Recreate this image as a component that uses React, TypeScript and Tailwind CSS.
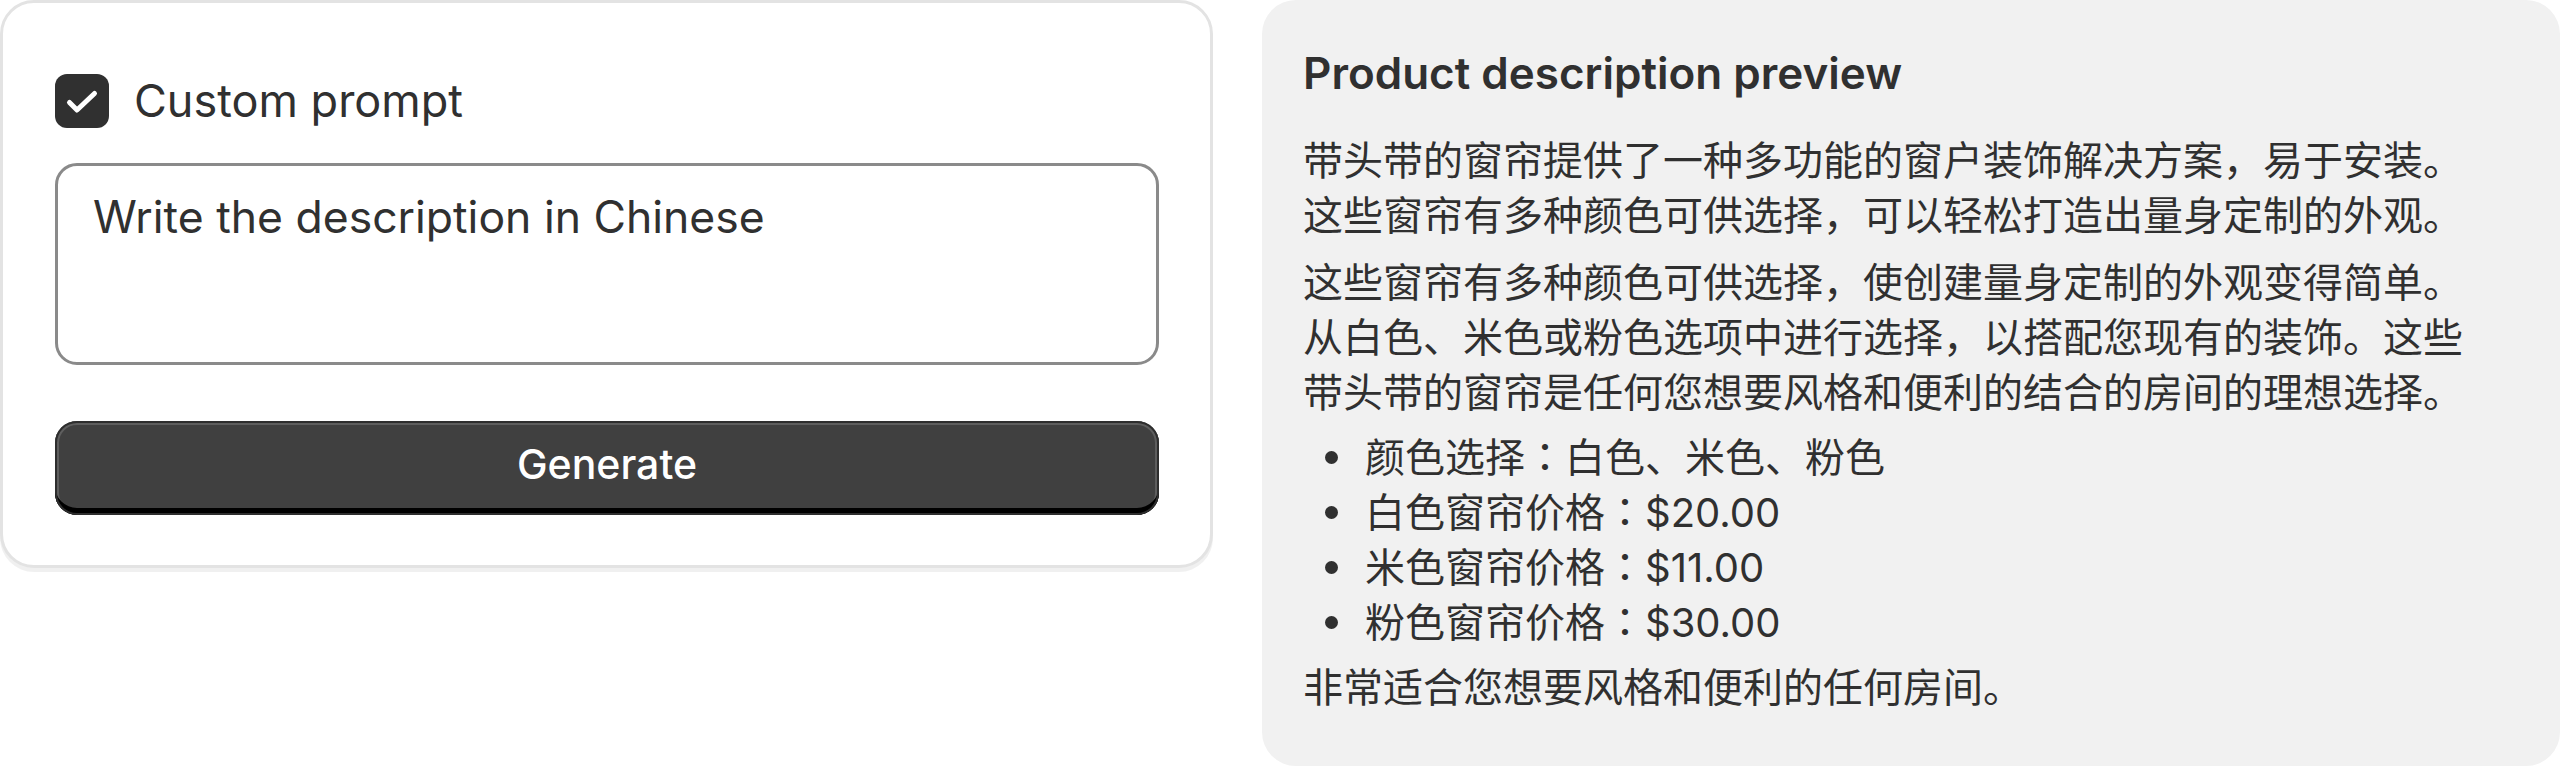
import React from 'react';

const bullets = ['颜色选择：白色、米色、粉色', '白色窗帘价格：$20.00', '米色窗帘价格：$11.00', '粉色窗帘价格：$30.00'];

const CheckIcon = () => (
    <svg viewBox="0 0 54 54" className="h-[54px] w-[54px]" fill="none">
        <path d="M14.5 28.5 L22 36 L39.5 19.5" stroke="#fff" strokeWidth="5" strokeLinecap="round" strokeLinejoin="round" />
    </svg>
);

// full-width colon sits centred in the JP face
const withColon = (text: string) => {
    const [label, value] = text.split('：');
    return (
        <>
            {label}
            <span className="font-['Noto_Sans_CJK_JP',sans-serif] leading-none">：</span>
            {value}
        </>
    );
};

const PromptCard = () => (
    <div className="box-border flex h-[568px] w-[1213px] shrink-0 flex-col rounded-[34px] border-[3px] border-[#e3e3e3] bg-white pl-[52px] pr-[51px] pt-[71px] shadow-[0_4px_0_0_rgba(0,0,0,0.06)]">
        <label className="flex items-center gap-[25px]">
            <span className="flex h-[54px] w-[54px] items-center justify-center rounded-[12px] bg-[#303030]">
                <CheckIcon />
            </span>
            <span className="text-[45px] leading-[54px]">Custom prompt</span>
        </label>
        <textarea
            readOnly
            defaultValue="Write the description in Chinese"
            className="mt-[35px] box-border h-[202px] w-full resize-none rounded-[22px] border-[3px] border-[#8a8a8a] bg-white px-[35px] pt-[24px] text-[44.5px] leading-[55px] text-[#303030] outline-none"
        />
        <button className="mt-[56px] box-border h-[94px] w-full rounded-[22px] bg-[#404040] pb-[6px] text-[41px] font-medium text-white shadow-[inset_0_0_0_2px_#2e2e2e,inset_0_-7px_0_0_#000,inset_0_0_0_4px_#5e5e5e]">
            Generate
        </button>
    </div>
);

const PreviewPanel = () => (
    <div className="box-border h-[766px] w-[1298px] shrink-0 rounded-[34px] bg-[#f1f1f1] pl-[41px] pt-[46px]">
        <div className="w-[1180px]">
            <h2 className="text-[44px] font-semibold leading-[55px]">Product description preview</h2>
            <div className="mt-[32px] text-[40px] leading-[55px]">
                <p>带头带的窗帘提供了一种多功能的窗户装饰解决方案，易于安装。这些窗帘有多种颜色可供选择，可以轻松打造出量身定制的外观。</p>
                <p className="mt-[12px]">
                    这些窗帘有多种颜色可供选择，使创建量身定制的外观变得简单。从白色、米色或粉色选项中进行选择，以搭配您现有的装饰。这些带头带的窗帘是任何您想要风格和便利的结合的房间的理想选择。
                </p>
                <ul className="mt-[10px]">
                    {bullets.map((b) => (
                        <li key={b} className="flex h-[55px] items-center">
                            <span className="ml-[22px] mr-[27px] h-[13px] w-[13px] rounded-full bg-[#303030]" />
                            <span>{withColon(b)}</span>
                        </li>
                    ))}
                </ul>
                <p className="mt-[10px]">非常适合您想要风格和便利的任何房间。</p>
            </div>
        </div>
    </div>
);

export default function App() {
    return (
        <div className="flex h-[766px] w-[2560px] items-start gap-[49px] overflow-hidden bg-white font-['Inter','Noto_Sans_CJK_SC',sans-serif] text-[#303030]">
            <PromptCard />
            <PreviewPanel />
        </div>
    );
}
